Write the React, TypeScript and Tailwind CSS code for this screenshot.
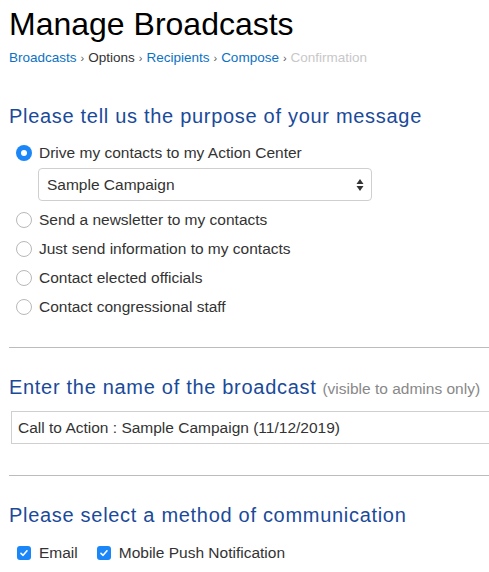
import React from 'react';

const purposes = [
    'Send a newsletter to my contacts',
    'Just send information to my contacts',
    'Contact elected officials',
    'Contact congressional staff',
];

const Radio = ({ checked = false }: { checked?: boolean }) =>
    checked ? (
        <span className="flex h-[16px] w-[16px] items-center justify-center rounded-full bg-[#1a86f8]">
            <span className="h-[6px] w-[6px] rounded-full bg-white" />
        </span>
    ) : (
        <span className="h-[16px] w-[16px] rounded-full border border-[#b8b8b8] bg-white" />
    );

const Checkbox = () => (
    <span className="flex h-[14px] w-[14px] items-center justify-center rounded-[3px] bg-[#1a86f8]">
        <svg width="10" height="10" viewBox="0 0 10 10" fill="none">
            <path d="M2 5.3 L4.1 7.3 L8 2.8" stroke="white" strokeWidth="1.6" strokeLinecap="round" strokeLinejoin="round" />
        </svg>
    </span>
);

const Sep = () => <span className="mx-[4px] text-[11px] text-[#555]">›</span>;

export default function App() {
    return (
        <div className="w-[489px] h-[572px] overflow-hidden bg-white font-['Liberation_Sans',Arial,sans-serif] text-[#333]">
            <div className="pl-[9px]">
                {/* Page title + breadcrumb */}
                <h1 className="pt-[6px] text-[32px] leading-[36px] text-black">Manage Broadcasts</h1>
                <div className="mt-[6px] flex items-center text-[13.5px] leading-[20px]">
                    <span className="text-[#0b72c4]">Broadcasts</span>
                    <Sep />
                    <span className="text-[#333]">Options</span>
                    <Sep />
                    <span className="text-[#0b72c4]">Recipients</span>
                    <Sep />
                    <span className="text-[#0b72c4]">Compose</span>
                    <Sep />
                    <span className="text-[#c8c8c8]">Confirmation</span>
                </div>

                {/* Purpose */}
                <h2 className="mt-[36px] text-[20px] leading-[24px] tracking-[0.7px] text-[#1a4a9a]">
                    Please tell us the purpose of your message
                </h2>
                <div className="mt-[10px] flex flex-col">
                    <label className="flex h-[29px] items-center gap-[7px] pl-[7px] text-[15.5px]">
                        <Radio checked />
                        <span>Drive my contacts to my Action Center</span>
                    </label>
                    <div className="mb-[4px] ml-[29px] mt-[1px] flex h-[33px] w-[334px] items-center justify-between rounded-[4px] border border-[#cfcfcf] pl-[8px] pr-[7px] text-[15.5px]">
                        <span>Sample Campaign</span>
                        <svg width="8" height="14" viewBox="0 0 8 14">
                            <path d="M4 1 L7.5 6 L0.5 6 Z" fill="#333" />
                            <path d="M4 13 L7.5 8 L0.5 8 Z" fill="#333" />
                        </svg>
                    </div>
                    {purposes.map((p) => (
                        <label key={p} className="flex h-[29px] items-center gap-[7px] pl-[7px] text-[15.5px]">
                            <Radio />
                            <span>{p}</span>
                        </label>
                    ))}
                </div>

                <hr className="mt-[26px] border-t border-[#bcbcbc]" />

                {/* Broadcast name */}
                <h2 className="mt-[27px] flex items-baseline text-[20px] leading-[24px] tracking-[0.7px] text-[#1a4a9a]">
                    Enter the name of the broadcast
                    <span className="ml-[6px] text-[15.5px] tracking-normal text-[#888]">(visible to admins only)</span>
                </h2>
                <div className="ml-[2px] mt-[10px] flex h-[33px] w-[520px] items-center border border-[#cfcfcf] pl-[6px] text-[15.5px]">
                    Call to Action : Sample Campaign (11/12/2019)
                </div>

                <hr className="mt-[31px] border-t border-[#bcbcbc]" />

                {/* Communication method */}
                <h2 className="mt-[27px] text-[20px] leading-[24px] tracking-[0.7px] text-[#1a4a9a]">
                    Please select a method of communication
                </h2>
                <div className="mt-[16px] flex h-[20px] items-center pl-[8px] text-[15.5px]">
                    <label className="flex items-center gap-[8px]">
                        <Checkbox />
                        <span>Email</span>
                    </label>
                    <label className="ml-[19px] flex items-center gap-[8px]">
                        <Checkbox />
                        <span>Mobile Push Notification</span>
                    </label>
                </div>
            </div>
        </div>
    );
}
